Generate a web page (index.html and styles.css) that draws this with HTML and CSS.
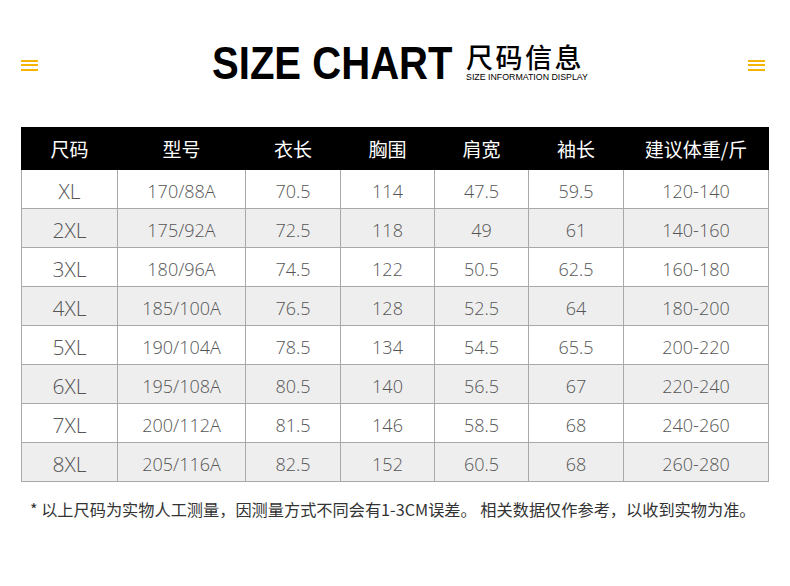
FILE: index.html
```html
<!DOCTYPE html>
<html lang="zh">
<head>
<meta charset="utf-8">
<title>Size Chart</title>
<link rel="stylesheet" href="styles.css">
</head>
<body>
<div class="page">
  <header class="top">
    <span class="burger"><i></i><i></i><i></i></span>
    <div class="title">
      <span class="title-en"><span class="title-en-in">SIZE CHART</span></span>
      <span class="title-cn">
        <span class="cn-main">尺码信息</span>
        <span class="cn-sub">SIZE INFORMATION DISPLAY</span>
      </span>
    </div>
    <span class="burger"><i></i><i></i><i></i></span>
  </header>
  <table class="chart">
    <colgroup>
      <col class="c1"><col class="c2"><col class="c3"><col class="c4"><col class="c5"><col class="c6"><col class="c7">
    </colgroup>
    <thead>
      <tr><th>尺码</th><th>型号</th><th>衣长</th><th>胸围</th><th>肩宽</th><th>袖长</th><th>建议体重/斤</th></tr>
    </thead>
    <tbody>
      <tr><td class="sz">XL</td><td>170/88A</td><td>70.5</td><td>114</td><td>47.5</td><td>59.5</td><td>120-140</td></tr>
      <tr><td class="sz">2XL</td><td>175/92A</td><td>72.5</td><td>118</td><td>49</td><td>61</td><td>140-160</td></tr>
      <tr><td class="sz">3XL</td><td>180/96A</td><td>74.5</td><td>122</td><td>50.5</td><td>62.5</td><td>160-180</td></tr>
      <tr><td class="sz">4XL</td><td>185/100A</td><td>76.5</td><td>128</td><td>52.5</td><td>64</td><td>180-200</td></tr>
      <tr><td class="sz">5XL</td><td>190/104A</td><td>78.5</td><td>134</td><td>54.5</td><td>65.5</td><td>200-220</td></tr>
      <tr><td class="sz">6XL</td><td>195/108A</td><td>80.5</td><td>140</td><td>56.5</td><td>67</td><td>220-240</td></tr>
      <tr><td class="sz">7XL</td><td>200/112A</td><td>81.5</td><td>146</td><td>58.5</td><td>68</td><td>240-260</td></tr>
      <tr><td class="sz">8XL</td><td>205/116A</td><td>82.5</td><td>152</td><td>60.5</td><td>68</td><td>260-280</td></tr>
    </tbody>
  </table>
  <p class="note">* 以上尺码为实物人工测量，因测量方式不同会有1-3CM误差。 相关数据仅作参考，以收到实物为准。</p>
</div>
</body>
</html>
```
FILE: styles.css
```css
html, body {
  margin: 0;
  padding: 0;
  background: #ffffff;
}
.page {
  width: 790px;
  height: 586px;
  padding: 0 22px 0 21px;
  box-sizing: border-box;
  font-family: "Liberation Sans", "Noto Sans CJK SC", sans-serif;
}
.top {
  height: 127px;
  display: flex;
  align-items: flex-start;
  justify-content: space-between;
}
.burger {
  margin-top: 60px;
  width: 17px;
  display: flex;
  flex-direction: column;
  gap: 2.4px;
}
.burger:last-child {
  margin-right: 3px;
}
.burger i {
  display: block;
  height: 2px;
  background: #f4b400;
}
.title {
  display: flex;
  align-items: flex-start;
  margin-top: 37px;
  margin-left: 14px;
}
.title-en {
  display: block;
  width: 238px;
  overflow: visible;
  white-space: nowrap;
}
.title-en-in {
  display: inline-block;
  font-family: "Liberation Sans", sans-serif;
  font-weight: 700;
  font-size: 47px;
  line-height: 52px;
  color: #000;
  transform: scaleX(0.853);
  transform-origin: left center;
}
.title-cn {
  display: flex;
  flex-direction: column;
  margin-left: 16px;
  margin-top: 6px;
}
.cn-main {
  font-family: "Noto Sans CJK SC", sans-serif;
  font-size: 27px;
  line-height: 27px;
  font-weight: 500;
  color: #000;
  letter-spacing: 2.5px;
}
.cn-sub {
  font-family: "Liberation Sans", sans-serif;
  font-size: 8.8px;
  line-height: 10px;
  color: #000;
  margin-top: 2px;
}
.chart {
  width: 747px;
  border-collapse: collapse;
  table-layout: fixed;
}
.c1 { width: 96px; }
.c2 { width: 128px; }
.c3 { width: 95px; }
.c4 { width: 94px; }
.c5 { width: 94px; }
.c6 { width: 95px; }
.c7 { width: 145px; }
.chart th {
  background: #000;
  color: #fff;
  height: 41px;
  padding: 0;
  font-family: "Noto Sans CJK SC", sans-serif;
  font-weight: 400;
  font-size: 19px;
  text-align: center;
  border: 1px solid #000;
}
.chart td {
  height: 34px;
  padding: 4px 0 0;
  text-align: center;
  border: 1px solid #a9a9a9;
  color: #555;
  font-family: "Open Sans", "Noto Sans CJK SC", sans-serif;
  font-weight: 300;
  font-size: 18px;
}
.chart td.sz {
  font-size: 21px;
}
.chart tbody tr:nth-child(even) td {
  background: #eeeeee;
}
.note {
  margin: 15px 0 0 9px;
  font-family: "Noto Sans CJK SC", sans-serif;
  font-size: 16.2px;
  color: #333;
  white-space: nowrap;
}
```
